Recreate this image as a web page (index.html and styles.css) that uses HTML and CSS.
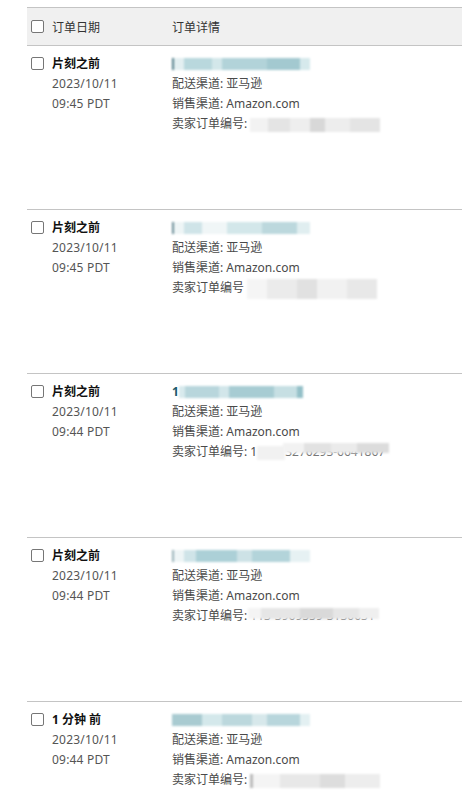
FILE: index.html
```html
<!DOCTYPE html>
<html lang="zh-CN">
<head>
<meta charset="utf-8">
<link rel="stylesheet" href="styles.css">
</head>
<body>
<div class="table">
  <div class="head">
    <div class="col-date"><span class="cb"></span><span>订单日期</span></div>
    <div class="col-detail">订单详情</div>
  </div>

  <div class="row">
    <div class="col-date">
      <div class="line"><span class="cb"></span><b>片刻之前</b></div>
      <div class="sub">2023/10/11</div>
      <div class="sub">09:45 PDT</div>
    </div>
    <div class="col-detail">
      <div class="line"><span class="mask id m1"></span></div>
      <div class="line">配送渠道: 亚马逊</div>
      <div class="line">销售渠道: Amazon.com</div>
      <div class="line">卖家订单编号: <span class="mask sell s1"></span></div>
    </div>
  </div>

  <div class="row">
    <div class="col-date">
      <div class="line"><span class="cb"></span><b>片刻之前</b></div>
      <div class="sub">2023/10/11</div>
      <div class="sub">09:45 PDT</div>
    </div>
    <div class="col-detail">
      <div class="line"><span class="mask id m2"></span></div>
      <div class="line">配送渠道: 亚马逊</div>
      <div class="line">销售渠道: Amazon.com</div>
      <div class="line">卖家订单编号 <span class="mask sell s2"></span></div>
    </div>
  </div>

  <div class="row">
    <div class="col-date">
      <div class="line"><span class="cb"></span><b>片刻之前</b></div>
      <div class="sub">2023/10/11</div>
      <div class="sub">09:44 PDT</div>
    </div>
    <div class="col-detail">
      <div class="line"><span class="idtxt">1</span><span class="mask id m3"></span></div>
      <div class="line">配送渠道: 亚马逊</div>
      <div class="line">销售渠道: Amazon.com</div>
      <div class="line">卖家订单编号: 1<span class="mask gap"></span><span class="half">3276293-6641867</span></div>
    </div>
  </div>

  <div class="row">
    <div class="col-date">
      <div class="line"><span class="cb"></span><b>片刻之前</b></div>
      <div class="sub">2023/10/11</div>
      <div class="sub">09:44 PDT</div>
    </div>
    <div class="col-detail">
      <div class="line"><span class="mask id m4"></span></div>
      <div class="line">配送渠道: 亚马逊</div>
      <div class="line">销售渠道: Amazon.com</div>
      <div class="line">卖家订单编号: <span class="half full">113-3969559-3130631</span></div>
    </div>
  </div>

  <div class="row">
    <div class="col-date">
      <div class="line"><span class="cb"></span><b>1 分钟 前</b></div>
      <div class="sub">2023/10/11</div>
      <div class="sub">09:44 PDT</div>
    </div>
    <div class="col-detail">
      <div class="line"><span class="mask id m5"></span></div>
      <div class="line">配送渠道: 亚马逊</div>
      <div class="line">销售渠道: Amazon.com</div>
      <div class="line">卖家订单编号: <span class="mask sell s5"></span></div>
    </div>
  </div>
</div>
</body>
</html>
```
FILE: styles.css
```css
html, body {
  margin: 0;
  padding: 0;
  background: #fff;
}
body {
  font-family: "Noto Sans", "Noto Sans CJK SC", sans-serif;
  font-size: 12px;
  color: #4a4a4a;
  height: 802px;
  overflow: hidden;
}
.table {
  margin: 7px 0 0 27px;
  border-top: 1px solid #c4c4c4;
}
.head {
  display: flex;
  align-items: center;
  height: 37px;
  background: #f0f0f0;
  border-bottom: 1px solid #c4c4c4;
  color: #333;
}
.head .col-date {
  display: flex;
  align-items: center;
}
.col-date {
  width: 141px;
  padding-left: 4px;
  flex: none;
}
.col-detail {
  flex: 1;
}
.cb {
  display: inline-block;
  box-sizing: border-box;
  width: 13px;
  height: 13px;
  border: 1px solid #767676;
  border-radius: 2px;
  background: #fff;
  margin-right: 8px;
  vertical-align: -2px;
}
.row {
  display: flex;
  height: 164px;
  border-bottom: 1px solid #c4c4c4;
  padding-top: 8px;
  box-sizing: border-box;
}
.line {
  height: 20px;
  line-height: 20px;
  white-space: nowrap;
}
.line b {
  color: #111;
  font-weight: 700;
}
.sub {
  height: 20px;
  line-height: 20px;
  padding-left: 21px;
  color: #555;
  letter-spacing: 0.2px;
}
.idtxt {
  color: #1b5a6a;
  font-weight: 700;
}
.mask {
  display: inline-block;
  vertical-align: middle;
  filter: blur(1.2px);
}
.mask.id {
  width: 138px;
  height: 12px;
  margin-top: -2px;
}
.mask.sell {
  width: 130px;
  height: 14px;
}
.mask.gap {
  width: 28px;
  height: 14px;
  background: #f1f1f1;
}
.half {
  position: relative;
  display: inline-block;
  color: #777;
  line-height: 20px;
}
.half::after {
  content: "";
  position: absolute;
  left: -2px;
  right: -4px;
  top: 1px;
  height: 10px;
  background: linear-gradient(90deg, #f2f2f2 0 20%, #e2e2e2 20% 45%, #ebebeb 45% 70%, #dcdcdc 70% 100%);
  filter: blur(1px);
}
.half.full::after {
  top: 2px;
  height: 11px;
  background: linear-gradient(90deg, #f4f4f4 0 10%, #e6e6e6 10% 40%, #d9d9d9 40% 65%, #e6e6e6 65% 85%, #efefef 85% 100%);
}
.m1 { background: linear-gradient(90deg, #557f8a 0 2px, #e3eff1 2px 12px, #b9d8dd 12px 40px, #d3e7ea 40px 50px, #b2d3d9 50px 95px, #a3c9d0 95px 128px, #d6e9ec 128px 138px); }
.m2 { background: linear-gradient(90deg, #6b8e97 0 2px, #eef5f6 2px 12px, #cfe4e8 12px 30px, #f0f6f7 30px 55px, #d3e7ea 55px 90px, #bcd8dd 90px 125px, #e0eef0 125px 138px); }
.m3 { width: 128px !important; background: linear-gradient(90deg, #d8eaed 0 6px, #b8d6dc 6px 40px, #d2e6ea 40px 50px, #a7ccd3 50px 95px, #c6dfe3 95px 118px, #94c0c8 118px 124px, #ffffff 124px 128px); }
.m4 { background: linear-gradient(90deg, #9ab3b9 0 2px, #eef5f6 2px 12px, #cfe4e8 12px 24px, #acd0d7 24px 65px, #cde2e6 65px 80px, #b3d4da 80px 118px, #e6f1f3 118px 138px); }
.m5 { background: linear-gradient(90deg, #a9cbd1 0 30px, #d4e8eb 30px 50px, #bcd8dd 50px 80px, #d7e8eb 80px 95px, #b8d6dc 95px 128px, #e3f0f2 128px 138px); }
.s1 { background: linear-gradient(90deg, #f2f2f2 0 18px, #e4e4e4 18px 40px, #eeeeee 40px 60px, #d8d8d8 60px 75px, #ededed 75px 100px, #e4e4e4 100px 130px); }
.s2 { background: linear-gradient(90deg, #f5f5f5 0 20px, #ebebeb 20px 50px, #e1e1e1 50px 70px, #f1f1f1 70px 100px, #e8e8e8 100px 130px); height: 20px !important; }
.s5 { background: linear-gradient(90deg, #bbbbbb 0 3px, #f4f4f4 3px 30px, #e8e8e8 30px 70px, #dddddd 70px 95px, #ededed 95px 130px); }
```
